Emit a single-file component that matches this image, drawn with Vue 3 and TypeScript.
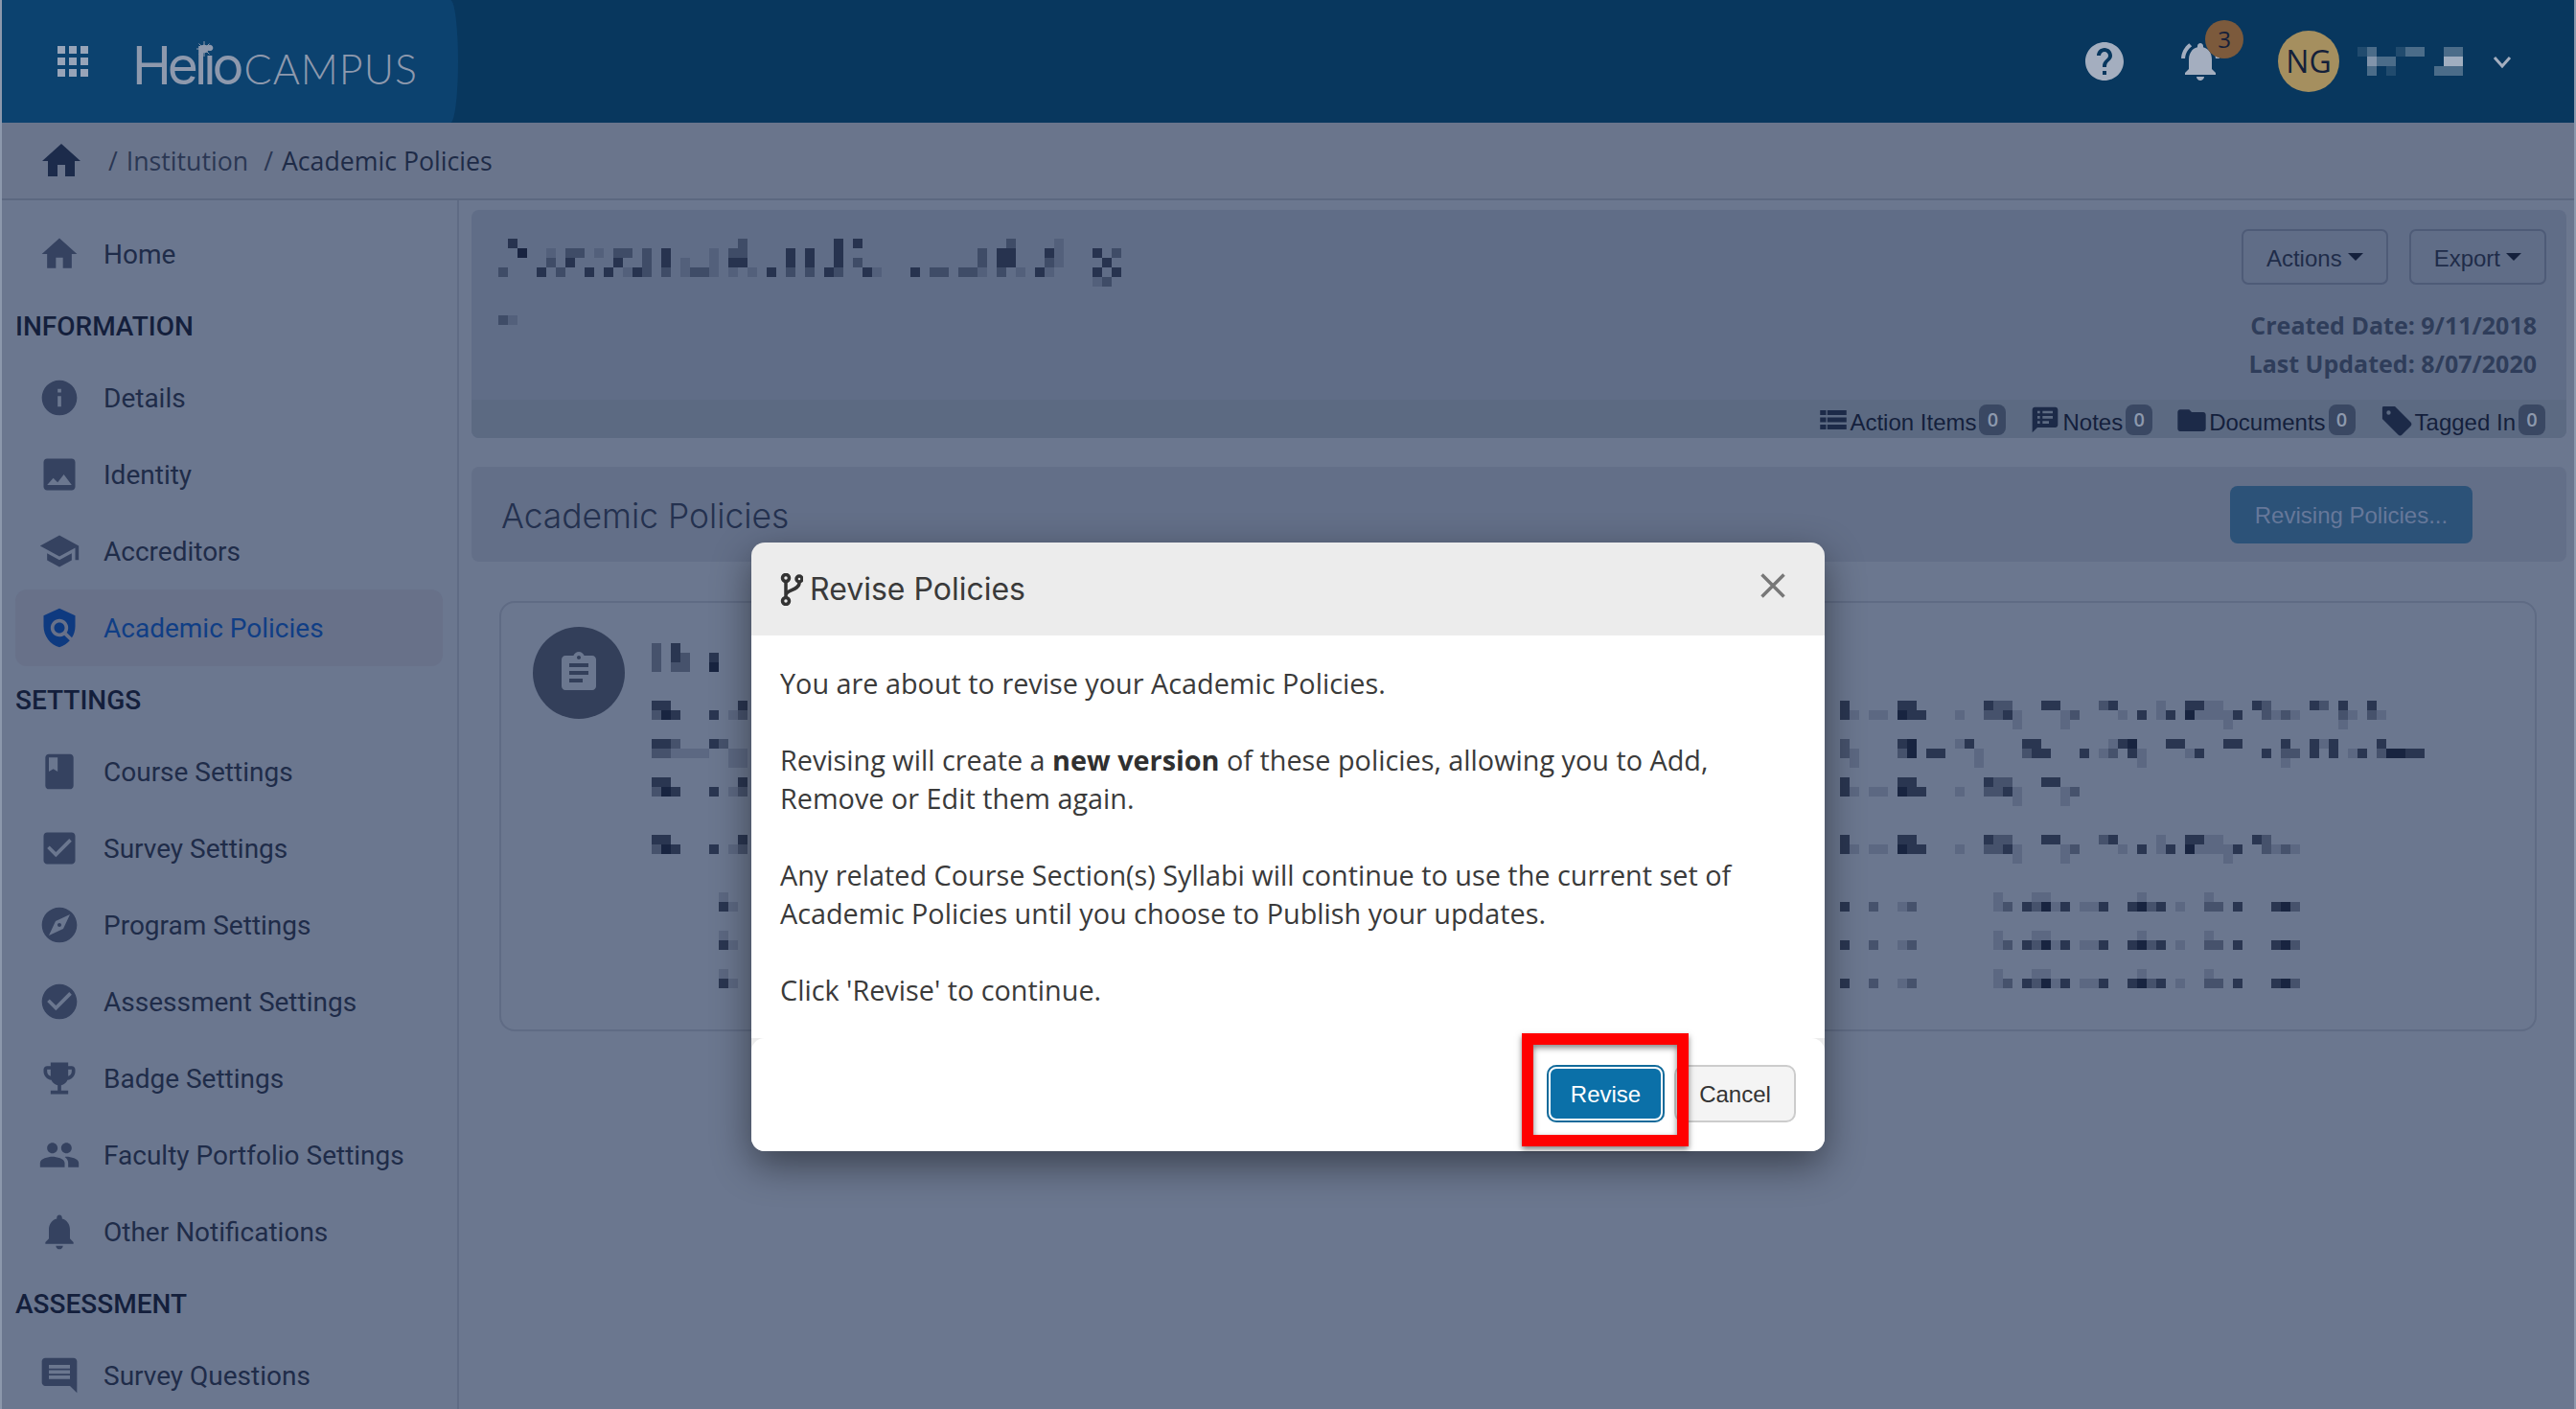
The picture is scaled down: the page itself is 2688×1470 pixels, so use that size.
<template>
  <div class="page">
    <header class="topbar">
      <div class="brand">
        <div class="apps">
          <span v-for="n in 9" :key="n"></span>
        </div>
        <div class="logo">
          <span class="logo-helio">Helio</span><span class="logo-campus">CAMPUS</span>
          <svg class="logo-sun" viewBox="0 0 16 16" width="16" height="16">
            <circle cx="8" cy="8" r="4" />
            <path d="M8 0v16M0 8h16M2.5 2.5l11 11M13.5 2.5l-11 11" stroke-width="1" />
          </svg>
        </div>
      </div>
      <div class="top-actions">
        <svg class="top-icon" viewBox="0 0 24 24"><path :d="icons.help" /></svg>
        <div class="bell">
          <svg class="top-icon" viewBox="0 0 24 24"><path :d="icons.bellActive" /></svg>
          <span class="bell-count">3</span>
        </div>
        <div class="avatar">NG</div>
        <svg class="mosaic name-mosaic" width="110" height="30" viewBox="0 0 110 30">
          <rect v-for="(c, i) in nameCells" :key="i" :x="c.x" :y="c.y" width="10" height="10" :opacity="c.o" />
        </svg>
        <svg class="chevron" viewBox="0 0 24 24" width="24" height="24">
          <path d="M4 8l8 9 8-9" fill="none" stroke-width="3" />
        </svg>
      </div>
    </header>

    <nav class="crumbs">
      <svg class="crumb-home" viewBox="0 0 24 24"><path :d="icons.home" /></svg>
      <span class="crumb"><span class="slash">/</span>Institution</span>
      <span class="crumb current"><span class="slash">/</span>Academic Policies</span>
    </nav>

    <div class="main">
      <aside class="sidebar">
        <template v-for="item in sideItems" :key="item.label">
          <div v-if="item.heading" class="side-heading">{{ item.label }}</div>
          <div v-else class="side-item" :class="{ active: item.active }">
            <svg viewBox="0 0 24 24"><path :d="item.icon" /></svg>
            <span>{{ item.label }}</span>
          </div>
        </template>
      </aside>

      <section class="content">
        <div class="head-card">
          <div class="head-body">
            <svg class="mosaic title-mosaic" width="670" height="100" viewBox="0 0 670 100">
              <rect v-for="(c, i) in titleCells" :key="i" :x="c.x" :y="c.y" width="10" height="10" :opacity="c.o" />
            </svg>
            <div class="head-side">
              <div class="head-buttons">
                <button class="btn-outline"><span>Actions</span><i class="caret"></i></button>
                <button class="btn-outline"><span>Export</span><i class="caret"></i></button>
              </div>
              <div class="dates">
                <div>Created Date: 9/11/2018</div>
                <div>Last Updated: 8/07/2020</div>
              </div>
            </div>
          </div>
          <div class="head-foot">
            <div v-for="tab in tabs" :key="tab.label" class="tab">
              <svg viewBox="0 0 24 24" :style="{ width: tab.size + 'px', height: tab.size + 'px' }"><path :d="tab.icon" /></svg>
              <span>{{ tab.label }}</span>
              <b>0</b>
            </div>
          </div>
        </div>

        <div class="title-card">
          <h2>Academic Policies</h2>
          <button class="btn-revising"><span>Revising Policies...</span></button>
        </div>

        <div class="policy-card">
          <div class="policy-badge">
            <svg viewBox="0 0 24 24"><path :d="icons.clipboard" /></svg>
          </div>
          <svg class="mosaic" width="1900" height="400" viewBox="0 0 1900 400">
            <rect v-for="(c, i) in policyCells" :key="i" :x="c.x" :y="c.y" width="10" height="10" :opacity="c.o" />
          </svg>
        </div>
      </section>
    </div>

    <div class="overlay">
      <div class="modal">
        <div class="modal-head">
          <svg class="branch" viewBox="0 0 24 34" width="24" height="34">
            <circle cx="6" cy="5" r="3.5" />
            <circle cx="6" cy="29" r="3.5" />
            <circle cx="20" cy="6" r="3" />
            <path d="M6 9v16M6 23c0-6 14-5 14-13" />
          </svg>
          <h3>Revise Policies</h3>
          <svg class="close" viewBox="0 0 26 26" width="26" height="26">
            <path d="M1.500 1.500l23 23M24.500 1.500l-23 23" />
          </svg>
        </div>
        <div class="modal-body">
          <p>You are about to revise your Academic Policies.</p>
          <p>Revising will create a <strong>new version</strong> of these policies, allowing you to Add, Remove or Edit them again.</p>
          <p>Any related Course Section(s) Syllabi will continue to use the current set of Academic Policies until you choose to Publish your updates.</p>
          <p>Click 'Revise' to continue.</p>
        </div>
        <div class="modal-foot">
          <button class="btn-primary"><span>Revise</span></button>
          <button class="btn-cancel"><span>Cancel</span></button>
        </div>
        <div class="callout"></div>
      </div>
    </div>
  </div>
</template>

<script setup lang="ts">
interface Cell {
  x: number
  y: number
  o: number
}

const icons = {
  home: 'M10 20v-6h4v6h5v-8h3L12 3 2 12h3v8z',
  help: 'M12 2C6.48 2 2 6.48 2 12s4.48 10 10 10 10-4.48 10-10S17.52 2 12 2zm1 17h-2v-2h2v2zm2.07-7.75l-.9.92C13.45 12.9 13 13.5 13 15h-2v-.5c0-1.1.45-2.1 1.17-2.83l1.24-1.26c.37-.36.59-.86.59-1.41 0-1.1-.9-2-2-2s-2 .9-2 2H8c0-2.21 1.79-4 4-4s4 1.79 4 4c0 .88-.36 1.68-.93 2.25z',
  bellActive: 'M7.58 4.08L6.15 2.65C3.75 4.48 2.17 7.3 2.03 10.5h2c.15-2.65 1.51-4.97 3.55-6.42zm12.39 6.42h2c-.15-3.2-1.73-6.02-4.12-7.85l-1.42 1.43c2.02 1.45 3.39 3.77 3.54 6.42zM18 11c0-3.07-1.64-5.64-4.5-6.32V4c0-.83-.67-1.5-1.5-1.5s-1.5.67-1.5 1.5v.68C7.63 5.36 6 7.92 6 11v5l-2 2v1h16v-1l-2-2v-5zm-6 11c.14 0 .27-.01.4-.04.65-.14 1.18-.58 1.44-1.18.1-.24.15-.5.15-.78h-4c.01 1.1.9 2 2.01 2z',
  clipboard: 'M19 3h-4.18C14.4 1.84 13.3 1 12 1c-1.3 0-2.4.84-2.82 2H5c-1.1 0-2 .9-2 2v14c0 1.1.9 2 2 2h14c1.1 0 2-.9 2-2V5c0-1.1-.9-2-2-2zm-7 0c.55 0 1 .45 1 1s-.45 1-1 1-1-.45-1-1 .45-1 1-1zm2 14H7v-2h7v2zm3-4H7v-2h10v2zm0-4H7V7h10v2z'
}

const sideItems = [
  { label: 'Home', icon: icons.home },
  { label: 'INFORMATION', heading: true },
  { label: 'Details', icon: 'M12 2C6.48 2 2 6.48 2 12s4.48 10 10 10 10-4.48 10-10S17.52 2 12 2zm1 15h-2v-6h2v6zm0-8h-2V7h2v2z' },
  { label: 'Identity', icon: 'M19 3H5c-1.100 0-2 .9-2 2v14c0 1.100.9 2 2 2h14c1.100 0 2-.9 2-2V5c0-1.100-.9-2-2-2zM5 18l3.500-4 2.500 2.500 3.500-4.500 4.500 6H5z' },
  { label: 'Accreditors', icon: 'M5 13.18v4L12 21l7-3.82v-4L12 17l-7-3.82zM12 3L1 9l11 6 9-4.91V17h2V9L12 3z' },
  { label: 'Academic Policies', active: true, icon: 'M12 1L3 5v6c0 5.55 3.84 10.74 9 12 2.3-.56 4.33-1.9 5.88-3.71l-3.12-3.12c-1.94 1.29-4.58 1.07-6.29-.64-1.95-1.95-1.95-5.12 0-7.07 1.95-1.95 5.12-1.95 7.07 0 1.71 1.71 1.92 4.35.64 6.29l2.9 2.9C20.29 15.69 21 13.38 21 11V5l-9-4zM12 15c1.66 0 3-1.34 3-3s-1.34-3-3-3-3 1.34-3 3 1.34 3 3 3z' },
  { label: 'SETTINGS', heading: true },
  { label: 'Course Settings', icon: 'M18 2H6c-1.1 0-2 .9-2 2v16c0 1.1.9 2 2 2h12c1.1 0 2-.9 2-2V4c0-1.1-.9-2-2-2zM6 4h5v8l-2.500-1.500L6 12V4z' },
  { label: 'Survey Settings', icon: 'M19 3H5c-1.11 0-2 .9-2 2v14c0 1.1.89 2 2 2h14c1.11 0 2-.9 2-2V5c0-1.1-.89-2-2-2zm-9 14l-5-5 1.41-1.41L10 14.17l7.59-7.59L19 8l-9 9z' },
  { label: 'Program Settings', icon: 'M12 10.900c-.61 0-1.100.49-1.100 1.100s.49 1.100 1.100 1.100c.61 0 1.100-.49 1.100-1.100s-.49-1.100-1.100-1.100zM12 2C6.48 2 2 6.48 2 12s4.48 10 10 10 10-4.48 10-10S17.52 2 12 2zm2.19 12.190L6 18l3.810-8.190L18 6l-3.810 8.190z' },
  { label: 'Assessment Settings', icon: 'M12 2C6.48 2 2 6.48 2 12s4.48 10 10 10 10-4.48 10-10S17.52 2 12 2zm-2 15l-5-5 1.41-1.41L10 14.17l7.59-7.59L19 8l-9 9z' },
  { label: 'Badge Settings', icon: 'M19 5h-2V3H7v2H5c-1.1 0-2 .9-2 2v1c0 2.55 1.92 4.63 4.39 4.94.63 1.5 1.98 2.63 3.61 2.96V19H7v2h10v-2h-4v-3.1c1.63-.33 2.98-1.46 3.61-2.96C19.08 12.63 21 10.55 21 8V7c0-1.1-.9-2-2-2zM5 8V7h2v3.82C5.84 10.4 5 9.3 5 8zm14 0c0 1.3-.84 2.4-2 2.82V7h2v1z' },
  { label: 'Faculty Portfolio Settings', icon: 'M16 11c1.66 0 2.99-1.34 2.99-3S17.66 5 16 5c-1.66 0-3 1.34-3 3s1.34 3 3 3zm-8 0c1.66 0 2.99-1.34 2.99-3S9.66 5 8 5C6.34 5 5 6.34 5 8s1.34 3 3 3zm0 2c-2.33 0-7 1.17-7 3.5V19h14v-2.5c0-2.33-4.67-3.5-7-3.5zm8 0c-.29 0-.62.02-.97.05 1.16.84 1.97 1.97 1.97 3.45V19h6v-2.5c0-2.33-4.67-3.5-7-3.5z' },
  { label: 'Other Notifications', icon: 'M12 22c1.1 0 2-.9 2-2h-4c0 1.1.89 2 2 2zm6-6v-5c0-3.07-1.64-5.64-4.5-6.32V4c0-.83-.67-1.5-1.5-1.5s-1.5.67-1.5 1.5v.68C7.63 5.36 6 7.92 6 11v5l-2 2v1h16v-1l-2-2z' },
  { label: 'ASSESSMENT', heading: true },
  { label: 'Survey Questions', icon: 'M20 2H4c-1.100 0-2 .9-2 2v12c0 1.100.9 2 2 2h14l4 4V4c0-1.100-.9-2-2-2zM18 14H6v-2h12zm0-3H6V9h12zm0-3H6V6h12z' }
]

const tabs = [
  { label: 'Action Items', size: 30, icon: 'M1 4h5v4H1zM7 4h16v4H7zM1 10h5v4H1zM7 10h16v4H7zM1 16h5v4H1zM7 16h16v4H7z' },
  { label: 'Notes', size: 32, icon: 'M4 2h16c1.100 0 2 .9 2 2v12c0 1.100-.9 2-2 2H6l-4 4V4c0-1.100.9-2 2-2zm2 3v2h2V5zm0 4v2h2V9zm0 4v2h2v-2zm4-8v2h8V5zm0 4v2h8V9zm0 4v2h5v-2z' },
  { label: 'Documents', size: 32, icon: 'M10 4H3c-1.100 0-2 .9-2 2v13c0 1.100.9 2 2 2h18c1.100 0 2-.9 2-2V8c0-1.100-.9-2-2-2h-9l-2-2z' },
  { label: 'Tagged In', size: 35, icon: 'M3 2h8l11.300 11.300c.8.8.8 2 0 2.800l-6.200 6.200c-.8.8-2 .8-2.800 0L2 11V3c0-.6.4-1 1-1zm3.500 3A1.500 1.500 0 1 0 6.500 8a1.500 1.500 0 0 0 0-3z' }
]

const levels: Record<string, number> = { '1': 0.16, '2': 0.42, '3': 0.75, '4': 0.95 }

// one row of the pixelated text, digits are darkness levels
const row = (x0: number, y: number, cells: string): Cell[] =>
  [...cells].flatMap((ch, i) => (levels[ch] ? [{ x: x0 + i * 10, y, o: levels[ch] }] : []))

const titleCells: Cell[] = [
  ...row(0, 0, '.3.......................2.........3.3...............2....1'),
  ...row(0, 10, '..4..1.22.1.22.2.3....1.22....3.3..3..............2.33...31...3.2'),
  ...row(0, 20, '.....2.3....3..2.3.1..1.33....3.3..3.2............2.33...21....3'),
  ...row(0, 30, '2...3.2..3.3.132.2.1221.1.1.3.2.2.32..31...3.22.221.2.1.31....3.3'),
  ...row(0, 40, '..............................................................12'),
  ...row(0, 80, '21')
]

const nameCells: Cell[] = [
  ...row(0, 0, '12..122..22'),
  ...row(0, 10, '.322.....44'),
  ...row(0, 20, '.2.1....222')
]

const lineA = '3.....33.......322...33....23....1..3311...32....32.3..3'
const lineB = '31.11.433...1..2231....12....1.3.13.411113..2121....21.21'
const lineC = '..................1....1................1...........1'
const smallA = '................1...11.........1......1'
const smallB = '3..2..12........12.32413.113..3423.1..22.3...342'

// x is measured from the left of the mosaic, the right block starts past the modal
const right = 1240
const top = (y: number) => y - 653

const policyCells: Cell[] = [
  ...row(0, top(670), '2.3'),
  ...row(0, top(680), '2.32..3'),
  ...row(0, top(690), '2.22..4'),
  ...row(0, top(730), '33.......3'),
  ...row(0, top(740), '243...3.12'),
  ...row(0, top(770), '332...32'),
  ...row(0, top(780), '221111..11'),
  ...row(0, top(790), '........11'),
  ...row(0, top(810), '33.......3'),
  ...row(0, top(820), '243...3.12'),
  ...row(0, top(870), '33.......3'),
  ...row(0, top(880), '243...3.12'),
  ...[930, 970, 1010].flatMap((y) => [
    ...row(0, top(y), '.......1'),
    ...row(0, top(y + 10), '.......31')
  ]),
  ...row(right, top(730), lineA),
  ...row(right, top(740), lineB),
  ...row(right, top(750), lineC),
  ...row(right, top(770), '2.....34....13.....33.......134...33....33....3..313....3'),
  ...row(right, top(780), '21....24.33...1....233...3.12.31....13......3.22.3.3.13.24433'),
  ...row(right, top(790), '.1............1................1..............1'),
  ...row(right, top(810), lineA.slice(0, 25)),
  ...row(right, top(820), lineB.slice(0, 25)),
  ...row(right, top(830), lineC.slice(0, 24)),
  ...row(right, top(870), lineA.slice(0, 48)),
  ...row(right, top(880), lineB.slice(0, 48)),
  ...row(right, top(890), lineC.slice(0, 48)),
  ...[930, 970, 1010].flatMap((y) => [
    ...row(right, top(y), smallA),
    ...row(right, top(y + 10), smallB)
  ])
]
</script>

<style>
html,
body {
  margin: 0;
  background: #6b778f;
}
</style>

<style scoped>
.page {
  position: relative;
  width: 2688px;
  height: 1470px;
  overflow: hidden;
  box-sizing: border-box;
  padding: 0 2px;
  background: #8c98ac;
  font-family: "Open Sans", sans-serif;
}

button {
  font-family: "Liberation Sans", Arial, sans-serif;
  font-size: 24px;
  cursor: pointer;
}

button span {
  position: relative;
  top: 1px;
}

/* top bar */
.topbar {
  height: 128px;
  display: flex;
  align-items: center;
  justify-content: space-between;
  background: #08375e;
}

.brand {
  width: 476px;
  height: 128px;
  box-sizing: border-box;
  padding-left: 58px;
  display: flex;
  align-items: center;
  gap: 46px;
  background: #0c426f;
  border-radius: 0 8px 8px 0 / 0 64px 64px 0;
}

.apps {
  display: grid;
  grid-template-columns: repeat(3, 8px);
  grid-auto-rows: 8px;
  gap: 4px;
}

.apps span {
  background: #98a4b8;
}

.logo {
  position: relative;
  display: flex;
  align-items: baseline;
  color: #8e99ad;
  padding-top: 8px;
}

.logo-helio {
  font-family: Inter, sans-serif;
  font-size: 55px;
  font-weight: 400;
  letter-spacing: -4px;
}

.logo-campus {
  font-family: Lato, sans-serif;
  font-size: 43px;
  font-weight: 300;
  letter-spacing: 1px;
  margin-left: 4px;
}

.logo-sun {
  position: absolute;
  left: 67px;
  top: 16px;
  fill: #8e99ad;
  stroke: #8e99ad;
}

.top-actions {
  display: flex;
  align-items: center;
  padding-right: 63px;
}

.top-icon {
  display: block;
  width: 48px;
  height: 48px;
  fill: #a4aebf;
}

.bell {
  position: relative;
  margin-left: 52px;
}

.bell-count {
  position: absolute;
  left: 29px;
  top: -19px;
  width: 40px;
  height: 40px;
  border-radius: 50%;
  background: #7c5a3c;
  color: #14203a;
  font-size: 24px;
  line-height: 40px;
  text-align: center;
}

.avatar {
  width: 64px;
  height: 64px;
  margin-left: 57px;
  border-radius: 50%;
  background: #a58f5f;
  color: #14203a;
  font-size: 32px;
  line-height: 64px;
  text-align: center;
}

.mosaic {
  display: block;
  flex: none;
  fill: #14203c;
}

.name-mosaic {
  margin-left: 19px;
  fill: #a9b4c5;
}

.chevron {
  margin-left: 29px;
  stroke: #a4aebf;
}

/* breadcrumb */
.crumbs {
  height: 81px;
  display: flex;
  align-items: center;
  box-sizing: border-box;
  padding-left: 38px;
  background: #6a758c;
  border-bottom: 2px solid #5c6880;
  font-size: 26.7px;
  color: #2a3753;
}

.crumb-home {
  width: 48px;
  height: 48px;
  fill: #1c2b4b;
  margin-right: 25px;
}

.crumb.current {
  margin-left: 16px;
  color: #1e2b47;
}

.slash {
  margin-right: 9px;
  color: #2a3753;
}

/* sidebar */
.main {
  display: flex;
  height: 1261px;
  background: #6b778f;
}

.sidebar {
  width: 477px;
  flex: none;
  box-sizing: border-box;
  padding: 16px 15px 0 14px;
  border-right: 2px solid #5f6b84;
  font-family: Roboto, sans-serif;
}

.side-heading {
  height: 70px;
  line-height: 72px;
  font-size: 28px;
  font-weight: 500;
  color: #141f3c;
}

.side-item {
  height: 80px;
  display: flex;
  align-items: center;
  gap: 24px;
  padding-left: 24px;
  border-radius: 12px;
  font-size: 28px;
  color: #1f2c49;
}

.side-item svg {
  width: 44px;
  height: 44px;
  flex: none;
  fill: #354260;
}

.side-item.active {
  background: #687189;
  color: #103e85;
}

.side-item.active svg {
  fill: #0e3a80;
}

/* content */
.content {
  flex: 1;
  min-width: 0;
  box-sizing: border-box;
  padding: 10px 8px 0 13px;
}

.head-card {
  height: 238px;
  display: flex;
  flex-direction: column;
  border-radius: 8px;
  overflow: hidden;
  background: #606d87;
}

.head-body {
  flex: 1;
  display: flex;
  justify-content: space-between;
  padding: 30px 21px 0 28px;
}

.head-side {
  display: flex;
  flex-direction: column;
  align-items: flex-end;
  margin-top: -10px;
}

.head-buttons {
  display: flex;
  gap: 22px;
}

.btn-outline {
  height: 58px;
  padding: 0 24px;
  display: flex;
  align-items: center;
  background: transparent;
  border: 2px solid #4e5b77;
  border-radius: 7px;
  color: #1f2c49;
}

.btn-outline span {
  top: 2px;
}

.caret {
  width: 0;
  height: 0;
  margin-left: 6px;
  border: 8px solid transparent;
  border-top-color: #14203c;
  border-bottom: 0;
}

.dates {
  margin-top: 22px;
  margin-right: 10px;
  font-size: 25px;
  font-weight: 700;
  line-height: 40px;
  color: #2f3d5a;
  text-align: right;
}

.head-foot {
  height: 40px;
  display: flex;
  justify-content: flex-end;
  gap: 25px;
  padding-right: 22px;
  background: #5c6a82;
  font-family: "Liberation Sans", Arial, sans-serif;
  font-size: 24px;
  color: #141f3c;
}

.tab {
  display: flex;
  align-items: center;
  gap: 2px;
}

.tab svg {
  margin-top: 2px;
  fill: #1c2a48;
}

.tab span {
  padding-top: 8px;
}

.tab b {
  width: 28px;
  height: 32px;
  margin: 1px 0 0 1px;
  border-radius: 8px;
  background: #3a4863;
  color: #8d99ad;
  font-family: "Open Sans", sans-serif;
  font-size: 20px;
  font-weight: 600;
  line-height: 32px;
  text-align: center;
}

.title-card {
  height: 99px;
  margin-top: 30px;
  display: flex;
  align-items: center;
  justify-content: space-between;
  box-sizing: border-box;
  padding: 0 98px 0 31px;
  border-radius: 8px;
  background: #636f88;
}

.title-card h2 {
  margin: 4px 0 0;
  font-family: Inter, sans-serif;
  font-size: 35.4px;
  font-weight: 300;
  color: #24314f;
}

.btn-revising {
  width: 253px;
  height: 60px;
  padding: 0;
  border: 0;
  border-radius: 8px;
  background: #2c5278;
  color: #66789a;
}

.policy-card {
  height: 449px;
  margin: 41px 31px 0 29px;
  display: flex;
  gap: 28px;
  box-sizing: border-box;
  padding: 25px 0 0 33px;
  border: 2px solid #5f6b84;
  border-radius: 16px;
  overflow: hidden;
}

.policy-badge {
  width: 96px;
  height: 96px;
  flex: none;
  display: flex;
  align-items: center;
  justify-content: center;
  border-radius: 50%;
  background: #333f5a;
}

.policy-badge svg {
  width: 48px;
  height: 48px;
  fill: #6b778f;
}

/* modal */
.overlay {
  position: absolute;
  inset: 0;
  display: flex;
  justify-content: center;
  align-items: flex-start;
  padding-top: 566px;
  box-sizing: border-box;
}

.modal {
  position: relative;
  width: 1120px;
  height: 635px;
  display: flex;
  flex-direction: column;
  background: #ececec;
  border-radius: 14px;
  box-shadow: 0 14px 40px rgba(0, 0, 0, 0.45);
}

.modal-head {
  height: 97px;
  flex: none;
  display: flex;
  align-items: center;
  box-sizing: border-box;
  padding: 0 41px 0 30px;
}

.branch {
  flex: none;
  fill: none;
  stroke: #333;
  stroke-width: 3.5;
  margin-right: 7px;
}

.modal-head h3 {
  flex: 1;
  margin: 0;
  font-family: Inter, sans-serif;
  font-size: 32px;
  font-weight: 400;
  color: #3a3a3a;
}

.close {
  stroke: #777;
  stroke-width: 3.500;
  margin-top: -8px;
}

.modal-body {
  height: 420px;
  flex: none;
  box-sizing: border-box;
  padding: 30px 30px 0;
  background: #fff;
  font-size: 28.8px;
  line-height: 40px;
  color: #3a3a3a;
}

.modal-body p {
  margin: 0 0 40px;
}

.modal-body strong {
  font-weight: 700;
  color: #303030;
}

.modal-foot {
  flex: 1;
  display: flex;
  justify-content: flex-end;
  gap: 10px;
  box-sizing: border-box;
  padding: 28px 30px 0;
  background: #fff;
  border-radius: 14px;
}

.btn-primary,
.btn-cancel {
  height: 60px;
  padding: 0;
  border-radius: 10px;
}

.btn-primary {
  width: 123px;
  border: 0;
  background: #0b70a8;
  color: #fff;
  box-shadow: inset 0 0 0 2px #126a9a, inset 0 0 0 4px #fff;
}

.btn-cancel {
  width: 127px;
  background: #f4f4f4;
  border: 2px solid #ccc;
  color: #333;
}

.callout {
  position: absolute;
  left: 804px;
  top: 512px;
  width: 174px;
  height: 118px;
  box-sizing: border-box;
  border: 12px solid #f00;
  box-shadow: 0 3px 6px rgba(0, 0, 0, 0.5), inset 0 3px 6px rgba(0, 0, 0, 0.5);
}
</style>
